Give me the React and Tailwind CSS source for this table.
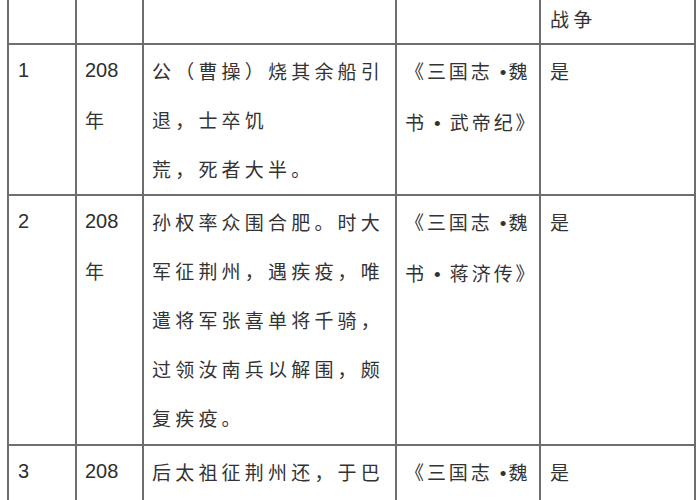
import React from 'react';

const CJK = { fontFamily: '"Noto Sans CJK SC", "Liberation Sans", sans-serif' };
const LAT = { fontFamily: '"Liberation Sans", sans-serif' };

const Dot = () => (
  <span className="tracking-[2px]" style={LAT}>•</span>
);

const rows = [
  {
    no: '1',
    year: ['208', '年'],
    text: ['公（曹操）烧其余船引', '退，士卒饥', '荒，死者大半。'],
    source: [
      <>《三国志 <Dot />魏</>,
      <>书 <Dot /> 武帝纪》</>
    ],
    war: '是',
    h: 'h-[151px]'
  },
  {
    no: '2',
    year: ['208', '年'],
    text: ['孙权率众围合肥。时大', '军征荆州，遇疾疫，唯', '遣将军张喜单将千骑，', '过领汝南兵以解围，颇', '复疾疫。'],
    source: [
      <>《三国志 <Dot />魏</>,
      <>书 <Dot /> 蒋济传》</>
    ],
    war: '是',
    h: 'h-[250px]'
  },
  {
    // row runs past the bottom of the shot
    no: '3',
    year: ['208'],
    text: ['后太祖征荆州还，于巴'],
    source: [<>《三国志 <Dot />魏</>],
    war: '是',
    h: 'h-[80px]'
  }
];

const Lines = ({ lines, tight }) => (
  <div
    className={`pt-px text-[19px] leading-[49px] text-[#333] whitespace-nowrap ${tight ? 'tracking-[2.9px]' : 'tracking-[4.2px]'}`}
    style={CJK}
  >
    {lines.map((l, i) => (
      <div key={i}>{l}</div>
    ))}
  </div>
);

const Row = ({ row }) => (
  <div className={`grid grid-cols-[68px_67px_253px_144px_155px] border-b-2 border-[#6e6e6e] overflow-hidden ${row.h}`}>
    <div className="border-r-2 border-[#6e6e6e] pl-[9px] pt-px text-[20px] leading-[49px] text-[#2e2e2e]" style={LAT}>
      {row.no}
    </div>
    <div className="border-r-2 border-[#6e6e6e] pl-[8px] pt-px leading-[49px] text-[#2e2e2e]">
      <div className="text-[20px]" style={LAT}>{row.year[0]}</div>
      {row.year[1] && <div className="text-[19px] text-[#333]" style={CJK}>{row.year[1]}</div>}
    </div>
    <div className="border-r-2 border-[#6e6e6e] pl-[8px]">
      <Lines lines={row.text} />
    </div>
    <div className="border-r-2 border-[#6e6e6e] pl-[8px] overflow-hidden">
      <Lines lines={row.source} tight />
    </div>
    <div className="border-r-2 border-[#6e6e6e] pl-[9px]">
      <Lines lines={[row.war]} />
    </div>
  </div>
);

export default function App() {
  return (
    <div className="w-[700px] h-[500px] overflow-hidden bg-white">
      <div className="ml-[7px] w-[689px] border-l-2 border-[#6e6e6e]">
        <div className="grid grid-cols-[68px_67px_253px_144px_155px] h-[45px] border-b-2 border-[#6e6e6e] overflow-hidden">
          <div className="border-r-2 border-[#6e6e6e]" />
          <div className="border-r-2 border-[#6e6e6e]" />
          <div className="border-r-2 border-[#6e6e6e]" />
          <div className="border-r-2 border-[#6e6e6e]" />
          <div className="border-r-2 border-[#6e6e6e] pl-[9px]">
            <div className="-mt-[6px] text-[19px] leading-[49px] tracking-[4.2px] text-[#333]" style={CJK}>
              战争
            </div>
          </div>
        </div>
        {rows.map((r) => (
          <Row key={r.no} row={r} />
        ))}
      </div>
    </div>
  );
}
